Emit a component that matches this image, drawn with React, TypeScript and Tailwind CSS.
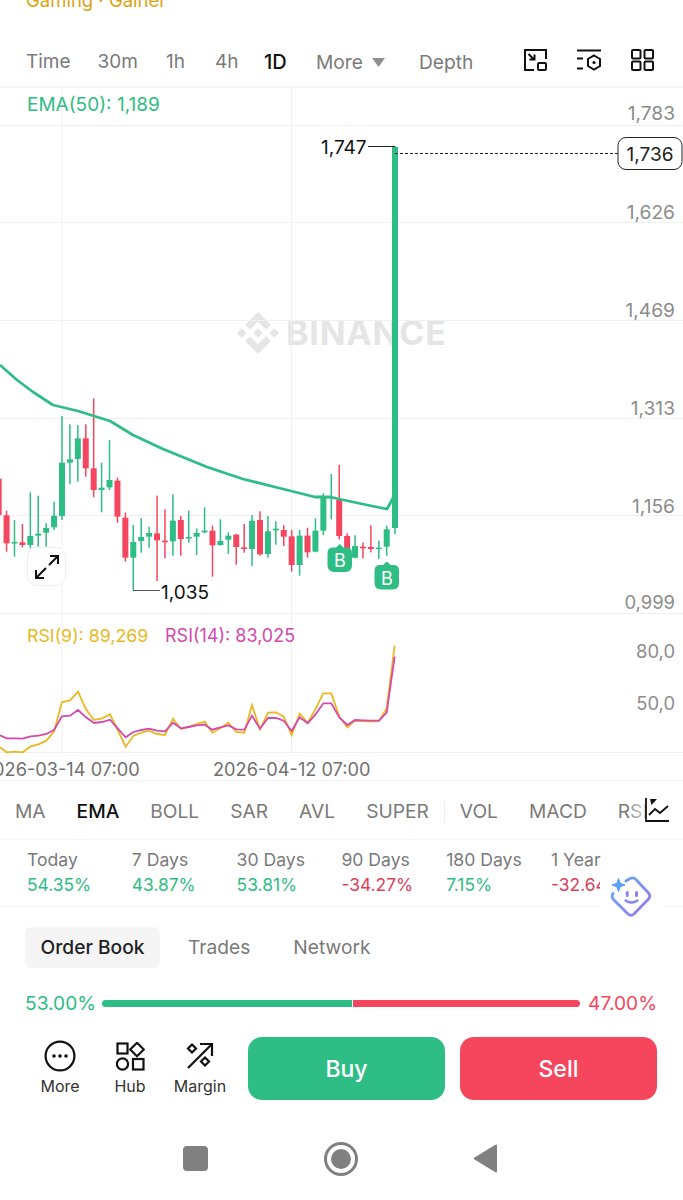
import type { ReactNode } from "react"
import { SiBinance } from "react-icons/si"

const GREEN = "#2ebd85"
const RED = "#f4465e"

// [color, wickTop, wickBottom, bodyTop, bodyBottom], measured on a 3x crop starting at y=380
const candles: [string, number, number, number, number][] = [
  ["r", 296, 410, 296, 405], ["r", 392, 515, 406, 490], ["g", 420, 530, 486, 490], ["r", 432, 502, 487, 495],
  ["g", 337, 505, 468, 495], ["g", 347, 500, 461, 467], ["g", 430, 500, 444, 458], ["g", 365, 450, 407, 442],
  ["g", 108, 420, 248, 408], ["g", 133, 313, 238, 248], ["g", 135, 305, 175, 237], ["r", 133, 290, 175, 265],
  ["r", 55, 352, 265, 330], ["g", 248, 397, 323, 330], ["g", 180, 330, 300, 322], ["r", 293, 428, 302, 410],
  ["r", 398, 545, 413, 533], ["g", 435, 632, 486, 533], ["g", 415, 518, 471, 483], ["g", 440, 503, 459, 470],
  ["r", 347, 603, 460, 481], ["r", 388, 535, 482, 486], ["g", 343, 527, 422, 484], ["r", 408, 527, 420, 477],
  ["g", 392, 488, 471, 475], ["g", 445, 525, 459, 470], ["g", 382, 460, 452, 457], ["r", 437, 590, 452, 496],
  ["g", 418, 497, 483, 495], ["g", 457, 522, 467, 479], ["r", 462, 554, 464, 501], ["r", 432, 518, 502, 507],
  ["g", 405, 558, 422, 507], ["r", 394, 527, 420, 523], ["g", 408, 533, 454, 522], ["g", 424, 494, 446, 451],
  ["r", 436, 498, 450, 470], ["r", 450, 575, 469, 555], ["g", 450, 587, 467, 555], ["r", 443, 533, 467, 517],
  ["g", 415, 517, 452, 515], ["g", 340, 465, 352, 452], ["g", 282, 418, 350, 353], ["r", 255, 478, 360, 468],
  ["r", 460, 512, 468, 508], ["g", 466, 535, 498, 533], ["r", 488, 535, 500, 505], ["r", 436, 517, 501, 507],
  ["g", 482, 537, 503, 507], ["g", 437, 527, 448, 500],
]

const rsiX = [0, 20, 45, 68, 92, 115, 139, 162, 186, 210, 234, 258, 282, 306, 330, 353, 377, 400, 424, 447, 471, 495, 519, 543, 567, 590, 614, 637, 661, 685, 709, 733, 756, 780, 804, 828, 851, 875, 899, 923, 946, 970, 994, 1018, 1042, 1065, 1089, 1113, 1137, 1160, 1184]
const rsi9 = [382, 397, 395, 397, 379, 373, 362, 335, 246, 241, 215, 268, 300, 295, 283, 330, 380, 348, 338, 332, 342, 345, 296, 327, 320, 312, 305, 338, 325, 308, 336, 338, 255, 328, 278, 277, 290, 345, 281, 308, 268, 220, 220, 290, 322, 302, 303, 305, 303, 265, 77]
const rsi14 = [346, 355, 355, 356, 349, 347, 342, 330, 289, 287, 270, 292, 309, 306, 299, 325, 352, 336, 330, 326, 332, 334, 308, 325, 321, 316, 314, 329, 322, 316, 328, 329, 287, 326, 294, 294, 302, 333, 292, 310, 284, 250, 250, 292, 315, 300, 301, 302, 302, 278, 110]

const emaLine = "0,365 17,380 33,392 53,405 78,411 110,421 133,435 163,449 207,467 243,479 283,489 315,497 330,497 339,499 367,505 387,509 393,498 397,488"

const rsiPoints = (ys: number[]) => ys.map((y, i) => `${rsiX[i] / 3},${620 + y / 3}`).join(" ")

function Badge({ x, y }: { x: number; y: number }) {
  return (
    <g transform={`translate(${x} ${y})`}>
      <path d="M12.3 0 L16 3.5 H19 Q24.5 3.5 24.5 9 V21 Q24.5 28 18 28 H7 Q0 28 0 21 V9 Q0 3.5 5.5 3.5 H8.6 Z" fill={GREEN} />
      <text x="12.3" y="23" textAnchor="middle" fontSize="18" fill="#fff">B</text>
    </g>
  )
}

function Chart() {
  return (
    <div className="relative h-[692px] overflow-hidden">
      <div className="absolute left-[237px] top-[224px] flex items-center gap-[7px] text-[#e5e5e5]">
        <SiBinance size={42} />
        <span className="text-[34px] font-bold leading-none tracking-[0.8px]">BINANCE</span>
      </div>
      <svg className="absolute inset-0" width="683" height="692" viewBox="0 88 683 692">
        {[125, 222, 320, 418, 515, 613].map((y) => (
          <line key={y} x1="0" x2="683" y1={y + 0.5} y2={y + 0.5} stroke="#f0f0f0" />
        ))}
        <line x1="0" x2="683" y1="752.5" y2="752.5" stroke="#f0f0f0" />
        {[62, 291.5].map((x) => (
          <line key={x} x1={x} x2={x} y1="88" y2="752" stroke="#f0f0f0" />
        ))}

        {candles.map(([c, wt, wb, bt, bb], i) => {
          const x = 62 + (i - 8) * 7.92
          const color = c === "g" ? GREEN : RED
          return (
            <g key={i} fill={color}>
              <rect x={x - 0.75} y={380 + wt / 3} width="1.5" height={(wb - wt) / 3} />
              <rect x={x - 3} y={380 + bt / 3} width="6" height={Math.max((bb - bt) / 3, 1.5)} />
            </g>
          )
        })}
        <rect x="392" y="147" width="6" height="381" fill={GREEN} />
        <rect x="394.2" y="146" width="1.5" height="388" fill={GREEN} />
        <polyline points={emaLine} fill="none" stroke={GREEN} strokeWidth="2.8" strokeLinejoin="round" />

        <line x1="368" x2="395" y1="146.5" y2="146.5" stroke="#222" />
        <line x1="395" x2="618" y1="153.5" y2="153.5" stroke="#222" strokeDasharray="3 2" />
        <line x1="133" x2="160" y1="590.5" y2="590.5" stroke="#555" />
        <text x="321" y="154" fontSize="19" fill="#111">1,747</text>
        <text x="161" y="598.5" fontSize="19" fill="#111">1,035</text>

        <Badge x={327.5} y={544} />
        <Badge x={374.5} y={561.5} />

        <text x="27" y="111" fontSize="19" fill={GREEN}>EMA(50): 1,189</text>
        <text x="27" y="641.5" fontSize="17.8" fill="#e8b923">RSI(9): 89,269</text>
        <text x="165" y="641.5" fontSize="18" fill="#d548ad">RSI(14): 83,025</text>

        <g fontSize="19.2" fill="#8c8c8c" textAnchor="end">
          <text x="675" y="120">1,783</text>
          <text x="675" y="219">1,626</text>
          <text x="675" y="317">1,469</text>
          <text x="675" y="415">1,313</text>
          <text x="675" y="513">1,156</text>
        </g>
        <g fontSize="18.4" fill="#8c8c8c" textAnchor="end">
          <text x="675" y="609">0,999</text>
          <text x="675" y="657.5">80,0</text>
          <text x="675" y="709.5">50,0</text>
        </g>

        <rect x="618" y="137.5" width="64" height="32" rx="8" fill="#fff" stroke="#222" />
        <text x="650" y="160.5" fontSize="19" fill="#222" textAnchor="middle">1,736</text>

        <polyline points={rsiPoints(rsi9)} fill="none" stroke="#e8b923" strokeWidth="1.8" />
        <polyline points={rsiPoints(rsi14)} fill="none" stroke="#d548ad" strokeWidth="1.8" />

        <g fontSize="18.2" fill="#707070">
          <text x="-18" y="775.5">2026-03-14 07:00</text>
          <text x="213" y="775.5">2026-04-12 07:00</text>
        </g>
      </svg>
      <div className="absolute left-[27px] top-[459px] flex h-[39px] w-[39px] items-center justify-center rounded-[10px] border border-[#eeeeee] bg-white">
        <svg width="26" height="26" viewBox="0 0 26 26" fill="none" stroke="#111" strokeWidth="2">
          <path d="M2 24 12 14M2 16v8h8M15 11 24 2M16 2h8v8" />
        </svg>
      </div>
    </div>
  )
}

function TopIcons() {
  return (
    <div className="absolute left-[524px] top-[49px] flex gap-[30px]">
      <svg className="mr-[-1px]" width="23" height="22" viewBox="0 0 23 22" fill="none" stroke="#111" strokeWidth="2">
        <path d="M10 21H1V1h21v9" />
        <rect x="14" y="14" width="8" height="7" rx="1" />
        <path d="M4.5 5 10 10.5M10.5 5.5v5h-5" />
      </svg>
      <svg className="ml-[1px]" width="24" height="22" viewBox="0 0 24 22" fill="none" stroke="#111" strokeWidth="2">
        <path d="M0 1.5h24M0 9.5h6M0 19.5h6" />
        <path d="M17 6.5l6 3.5v7l-6 3.5-6-3.5v-7z" />
        <circle cx="17" cy="13.5" r="1.6" fill="#111" stroke="none" />
      </svg>
      <svg width="23" height="22" viewBox="0 0 23 22" fill="none" stroke="#111" strokeWidth="2">
        <rect x="1" y="1" width="8.5" height="8.5" rx="1" />
        <rect x="13.5" y="1" width="8.5" height="8.5" rx="1" />
        <rect x="1" y="12.5" width="8.5" height="8.5" rx="1" />
        <rect x="13.5" y="12.5" width="8.5" height="8.5" rx="1" />
      </svg>
    </div>
  )
}

function Header() {
  return (
    <div className="relative h-[88px] border-b-2 border-[#f7f7f7]">
      <div className="absolute left-[26px] top-[-10px] text-[18.5px] leading-5 text-[#d9a514]">Gaming · Gainer</div>
      <div className="flex h-[86px] items-end pb-[12px] pl-[26px] text-[19px] leading-6 text-[#7a7a7a]">
        <span>Time</span>
        <span className="ml-[27px]">30m</span>
        <span className="ml-[28px] w-[22px]">1h</span>
        <span className="ml-[27px] w-[22px]">4h</span>
        <span className="ml-[27px] w-[25px] text-[20px] font-medium text-[#111]">1D</span>
        <span className="ml-[27px] flex items-center gap-[9px] text-[19.2px]">
          More
          <svg width="13" height="9" viewBox="0 0 13 9" fill="#8f8f8f"><path d="M0 0h13L6.5 9z" /></svg>
        </span>
        <span className="ml-[34px] text-[19.2px]">Depth</span>
      </div>
      <TopIcons />
    </div>
  )
}

function IndicatorRow() {
  const items = ["MA", "EMA", "BOLL", "SAR", "AVL", "SUPER"]
  return (
    <div className="relative flex h-[60px] items-center overflow-hidden border-y border-[#f3f3f3] pl-[15px] pt-[3px] text-[19.2px] text-[#7a7a7a]">
      <div className="flex items-center gap-[31px]">
        {items.map((t) => (
          <span key={t} className={t === "EMA" ? "font-medium text-[#111]" : ""}>{t}</span>
        ))}
      </div>
      <span className="mx-[15px] h-[22px] w-px bg-[#eeeeee]" />
      <div className="flex items-center gap-[31px]">
        <span>VOL</span>
        <span>MACD</span>
        <span>RSI</span>
      </div>
      <div className="absolute right-0 top-0 flex h-full w-[53px] items-center bg-gradient-to-r from-white/20 via-white to-white pl-[15px]">
        <svg width="24" height="24" viewBox="0 0 24 24" fill="none" stroke="#111" strokeWidth="1.8">
          <path d="M1 0v23h23" />
          <path d="M4 6 9.5 0h-7z" fill="#111" stroke="none" transform="translate(2.5 1)" />
          <path d="M4 17l6-6 5 4 8-7" />
        </svg>
      </div>
    </div>
  )
}

const stats = [
  { label: "Today", value: "54.35%", up: true },
  { label: "7 Days", value: "43.87%", up: true },
  { label: "30 Days", value: "53.81%", up: true },
  { label: "90 Days", value: "-34.27%", up: false },
  { label: "180 Days", value: "7.15%", up: true },
  { label: "1 Year", value: "-32.64%", up: false },
]

function Stats() {
  return (
    <div className="relative flex h-[67px] overflow-hidden border-b border-[#f3f3f3] pl-[27px] pt-[8px]">
      {stats.map((s) => (
        <div key={s.label} className="w-[104.8px] shrink-0">
          <div className="text-[17.6px] leading-6 text-[#7a7a7a]">{s.label}</div>
          <div className={`mt-[1px] text-[17.4px] leading-6 ${s.up ? "text-[#2ebd85]" : "text-[#dc3f5a]"}`}>{s.value}</div>
        </div>
      ))}
    </div>
  )
}

function Assistant() {
  return (
    <div className="absolute left-[600px] top-[870px] flex h-[50px] w-[63px] items-center justify-center bg-white">
      <svg width="44" height="44" viewBox="0 0 44 44" fill="none">
        <defs>
          <linearGradient id="robot" x1="0" y1="0" x2="1" y2="1">
            <stop offset="0" stopColor="#62a8f5" />
            <stop offset="1" stopColor="#9a78ec" />
          </linearGradient>
        </defs>
        <path d="M16 8 L20 5.5 Q23 4 25.5 6 L38.5 20 Q41 23 38.5 26 L24 41 Q21 43.5 18 41 L3.5 26.5 Q1 23.5 3 20.5" stroke="url(#robot)" strokeWidth="2.8" strokeLinecap="round" />
        <path d="M8.5 5.5 L10.2 10.3 L15 12 L10.2 13.7 L8.5 18.5 L6.8 13.7 L2 12 L6.8 10.3 Z" fill="#5b9cf8" stroke="#5b9cf8" strokeLinejoin="round" />
        <rect x="15.7" y="18" width="3" height="6" rx="1.5" fill="#8a85ee" />
        <rect x="25" y="18" width="3" height="6" rx="1.5" fill="#8a85ee" />
        <path d="M15.5 27.5 Q21.5 31.5 27.5 27.5" stroke="#8a85ee" strokeWidth="2.4" strokeLinecap="round" />
      </svg>
    </div>
  )
}

function ActionIcon({ label, children }: { label: string; children: ReactNode }) {
  return (
    <div className="flex w-[70px] flex-col items-center">
      <div className="flex h-[32px] items-center">{children}</div>
      <span className="mt-[4px] text-[16px] leading-5 text-[#333]">{label}</span>
    </div>
  )
}

function Footer() {
  return (
    <div className="flex items-center pl-[25px] pr-[26px] pt-[19px]">
      <div className="flex">
        <ActionIcon label="More">
          <svg width="32" height="32" viewBox="0 0 32 32" fill="none" stroke="#111" strokeWidth="2.2">
            <circle cx="16" cy="16" r="14.4" />
            <circle cx="10" cy="16" r="1.8" fill="#111" stroke="none" />
            <circle cx="16" cy="16" r="1.8" fill="#111" stroke="none" />
            <circle cx="22" cy="16" r="1.8" fill="#111" stroke="none" />
          </svg>
        </ActionIcon>
        <ActionIcon label="Hub">
          <svg width="29" height="29" viewBox="0 0 29 29" fill="none" stroke="#111" strokeWidth="2.2">
            <rect x="1.5" y="1.5" width="10" height="10" />
            <path d="M21 0.8 27.8 7.5 21 14.2 14.2 7.5z" />
            <circle cx="6.5" cy="22" r="5.6" />
            <rect x="17" y="17" width="10.5" height="10.5" />
          </svg>
        </ActionIcon>
        <ActionIcon label="Margin">
          <svg width="28" height="28" viewBox="0 0 28 28" fill="none" stroke="#111" strokeWidth="2.2">
            <path d="M2 26 26 2M14 2h12v12" />
            <path d="M6 2.5 10 6.5 6 10.5 2 6.5z" />
            <path d="M19 15.5 23 19.5 19 23.5 15 19.5z" />
          </svg>
        </ActionIcon>
      </div>
      <div className="ml-[13px] flex flex-1 gap-[15px]">
        <button className="h-[63px] flex-1 rounded-[14px] bg-[#2ebd85] pt-[1px] text-[23px] font-medium text-white">Buy</button>
        <button className="h-[63px] flex-1 rounded-[14px] bg-[#f6465d] pt-[1px] text-[23px] font-medium text-white">Sell</button>
      </div>
    </div>
  )
}

function NavBar() {
  return (
    <div className="relative flex h-[118px] items-center">
      <div className="ml-[183px] h-[25px] w-[25px] rounded-[4px] bg-[#808080]" />
      <div className="ml-[116px] flex h-[34px] w-[34px] items-center justify-center rounded-full border-[3px] border-[#808080]">
        <div className="h-[20px] w-[20px] rounded-full bg-[#808080]" />
      </div>
      <svg className="ml-[115px]" width="25" height="29" viewBox="0 0 25 29" fill="#808080">
        <path d="M24 1.5V27.5Q24 29 22 28L1.5 15.5Q0 14.5 1.5 13.5L22 1Q24 0 24 1.5Z" />
      </svg>
    </div>
  )
}

export default function App() {
  return (
    <div className="relative h-[1200px] w-[683px] overflow-hidden bg-white font-['Inter',sans-serif]">
      <Header />
      <Chart />
      <IndicatorRow />
      <Stats />
      <Assistant />

      <div className="flex items-center pl-[25px] pt-[20px] text-[19.2px] text-[#7a7a7a]">
        <span className="flex h-[41px] w-[135px] items-center justify-center rounded-md bg-[#f5f5f5] font-medium text-[#222]">Order Book</span>
        <span className="ml-[28px]">Trades</span>
        <span className="ml-[43px]">Network</span>
      </div>

      <div className="flex items-center pl-[25px] pr-[26px] pt-[21px] text-[19.2px]">
        <span className="w-[77px] text-[#2ebd85]">53.00%</span>
        <div className="h-[7px] w-[250px] rounded-l-full bg-[#2ebd85]" />
        <div className="ml-[1px] h-[7px] w-[227px] rounded-r-full bg-[#f6465d]" />
        <span className="ml-auto text-[#f6465d]">47.00%</span>
      </div>

      <Footer />
      <NavBar />
    </div>
  )
}
